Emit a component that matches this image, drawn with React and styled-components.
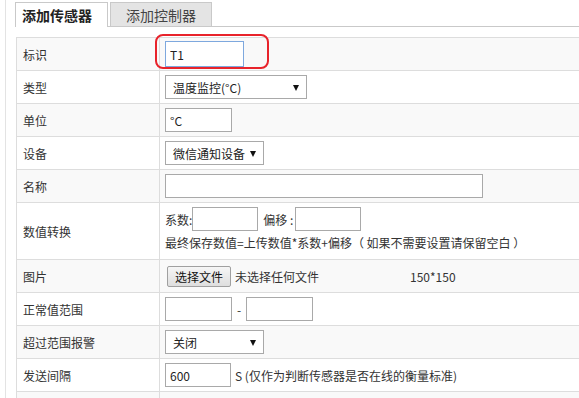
import React from 'react';
import styled, { createGlobalStyle } from 'styled-components';

const GlobalStyle = createGlobalStyle`
    body {
        margin: 0;
        background: #fff;
        color: #333;
        font-family: "Noto Sans CJK SC", "Noto Sans", sans-serif;
        font-size: 12px;
        overflow: hidden;
    }
    * {
        box-sizing: border-box;
    }
`;

const Page = styled.div`
    margin-left: 5px;
    padding-left: 9px;
    border-left: 1px solid #e3e3e3;
    height: 100vh;
    overflow: hidden;
`;

const TabBar = styled.div`
    display: flex;
    align-items: flex-end;
    gap: 2px;
    height: 27px;
    border-bottom: 1px solid #c9c9c9;
`;

const Tab = styled.div`
    height: ${p => (p.$active ? '25px' : '24px')};
    margin-bottom: ${p => (p.$active ? '-1px' : '0')};
    padding: ${p => (p.$active ? '0 15px 0 6px' : '0 15px')};
    display: flex;
    align-items: center;
    border: 1px solid #c9c9c9;
    border-bottom: none;
    background: ${p => (p.$active ? '#fff' : '#e4e4e4')};
    color: ${p => (p.$active ? '#222' : '#444')};
    font-size: 14px;
    font-weight: ${p => (p.$active ? 'bold' : 'normal')};
`;

const Table = styled.div`
    width: calc(100% + 120px);
    margin: 10px 0 0 1px;
    border: 1px solid #ddd;
    border-bottom: none;
`;

const Row = styled.div`
    display: grid;
    grid-template-columns: 143px 1fr;
    height: ${p => (p.$tall ? '57px' : '33px')};
    border-top: 1px solid #ddd;
    background: ${p => (p.$striped ? '#f9f9f9' : '#fff')};

    &:first-child {
        border-top: none;
        height: 32px;
    }
`;

const Label = styled.div`
    display: flex;
    align-items: center;
    padding-left: 6px;
    border-right: 1px solid #ddd;
    color: #333;
`;

const Field = styled.div`
    display: flex;
    align-items: ${p => (p.$top ? 'flex-start' : 'center')};
    padding: ${p => (p.$top ? '4px 0 0 5px' : '0 0 0 5px')};
    gap: 4px;
`;

const Input = styled.input`
    width: ${p => p.$w || 67}px;
    height: 24px;
    padding: 0 4px;
    border: 1px solid #a9a9a9;
    background: #fff;
    color: #222;
    font-family: inherit;
    font-size: 12px;
    outline: none;
`;

const FocusWrap = styled.span`
    position: relative;
    display: inline-flex;

    &::after {
        content: '';
        position: absolute;
        left: -10px;
        right: -25px;
        top: -7px;
        bottom: -2px;
        border: 2px solid #e8232b;
        border-radius: 8px;
        pointer-events: none;
    }
`;

const FocusInput = styled(Input)`
    width: 79px;
    height: 26px;
    border-color: #7ea8de;
`;

const SelectBox = styled.div`
    width: ${p => p.$w}px;
    height: 24px;
    display: flex;
    align-items: center;
    justify-content: space-between;
    padding: 0 7px 0 7px;
    border: 1px solid #a9a9a9;
    background: #fff;
    color: #222;
`;

const Arrow = styled.span`
    width: 0;
    height: 0;
    margin-top: 1px;
    border-left: 3.5px solid transparent;
    border-right: 3.5px solid transparent;
    border-top: 6px solid #111;
`;

const Stack = styled.div`
    display: flex;
    flex-direction: column;
    gap: 3px;
`;

const Line = styled.div`
    display: flex;
    align-items: center;
    gap: ${p => p.$gap || 0}px;
`;

const Text = styled.span`
    color: #333;
    margin-left: ${p => p.$ml || 0}px;
    white-space: nowrap;
`;

const FileButton = styled.button`
    height: 21px;
    padding: 0 7px;
    margin-left: 2px;
    border: 1px solid #a0a0a0;
    border-radius: 2px;
    background: linear-gradient(#f6f6f6, #dedede);
    color: #111;
    font-family: inherit;
    font-size: 12px;
`;

const TextArea = styled.div`
    align-self: flex-start;
    margin-top: 4px;
    width: 560px;
    height: 40px;
    border: 1px solid #a9a9a9;
    background: #fff;
`;

const Select = ({ w, children }) => (
    <SelectBox $w={w}>
        <span>{children}</span>
        <Arrow />
    </SelectBox>
);

const App = () => {
    return (
        <Page>
            <GlobalStyle />
            <TabBar>
                <Tab $active>添加传感器</Tab>
                <Tab>添加控制器</Tab>
            </TabBar>
            <Table>
                <Row $striped>
                    <Label>标识</Label>
                    <Field>
                        <FocusWrap>
                            <FocusInput defaultValue="T1" />
                        </FocusWrap>
                    </Field>
                </Row>
                <Row>
                    <Label>类型</Label>
                    <Field>
                        <Select w={142}>温度监控(°C)</Select>
                    </Field>
                </Row>
                <Row $striped>
                    <Label>单位</Label>
                    <Field>
                        <Input defaultValue="°C" />
                    </Field>
                </Row>
                <Row>
                    <Label>设备</Label>
                    <Field>
                        <Select w={99}>微信通知设备</Select>
                    </Field>
                </Row>
                <Row $striped>
                    <Label>名称</Label>
                    <Field>
                        <Input $w={318} />
                    </Field>
                </Row>
                <Row $tall>
                    <Label>数值转换</Label>
                    <Field $top>
                        <Stack>
                            <Line>
                                <Text>系数:</Text>
                                <Input $w={66} />
                                <Text $ml={5}>偏移 :</Text>
                                <Input $w={66} style={{ marginLeft: 2 }} />
                            </Line>
                            <Line>
                                <Text>最终保存数值=上传数值*系数+偏移（ 如果不需要设置请保留空白 ）</Text>
                            </Line>
                        </Stack>
                    </Field>
                </Row>
                <Row $striped>
                    <Label>图片</Label>
                    <Field>
                        <FileButton>选择文件</FileButton>
                        <Text>未选择任何文件</Text>
                        <Text $ml={87}>150*150</Text>
                    </Field>
                </Row>
                <Row>
                    <Label>正常值范围</Label>
                    <Field>
                        <Line $gap={5}>
                            <Input />
                            <Text>-</Text>
                            <Input />
                        </Line>
                    </Field>
                </Row>
                <Row $striped>
                    <Label>超过范围报警</Label>
                    <Field>
                        <Select w={99}>关闭</Select>
                    </Field>
                </Row>
                <Row>
                    <Label>发送间隔</Label>
                    <Field>
                        <Input $w={66} defaultValue="600" />
                        <Text>S (仅作为判断传感器是否在线的衡量标准)</Text>
                    </Field>
                </Row>
                <Row $striped $tall>
                    <Label />
                    <Field $top>
                        <TextArea />
                    </Field>
                </Row>
            </Table>
        </Page>
    );
};

export default App;
